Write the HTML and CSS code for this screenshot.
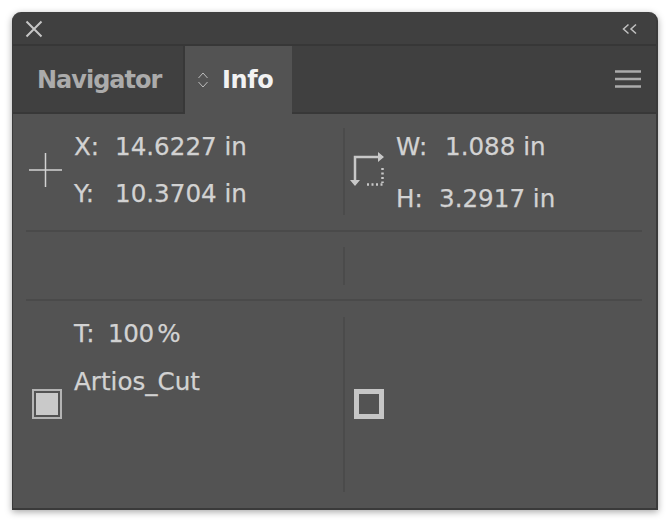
FILE: index.html
```html
<!DOCTYPE html>
<html lang="en">
<head>
<meta charset="utf-8">
<title>Info panel</title>
<link rel="stylesheet" href="styles.css">
</head>
<body>
<main class="panel">
  <header class="titlebar">
    <svg class="icon-close" width="18" height="18" viewBox="0 0 18 18"><path d="M1.5 1.5 16.5 16.5M16.500 1.5 1.5 16.5"/></svg>
    <svg class="icon-collapse" width="15" height="12" viewBox="0 0 15 12"><path d="M6.5 1.5 1.5 6 6.5 10.5M14 1.5 9 6 14 10.5"/></svg>
  </header>
  <nav class="tabbar">
    <div class="tab">Navigator</div>
    <div class="tab tab-active">
      <svg class="icon-stepper" width="12" height="18" viewBox="0 0 12 18"><path d="M1.5 7 6 2 10.500 7M1.500 11 6 16 10.500 11"/></svg>
      <span>Info</span>
    </div>
    <svg class="icon-menu" width="26" height="18" viewBox="0 0 26 18"><path d="M0 1.500H26M0 9H26M0 16.500H26"/></svg>
  </nav>
  <section class="content">
    <div class="section section-position">
      <div class="cell">
        <svg class="icon-cross" width="33" height="34" viewBox="0 0 33 34"><path d="M0 17H33M16.500 0V34"/></svg>
        <div class="readout">
          <div class="line"><span class="label">X:</span><span class="value">14.6227 in</span></div>
          <div class="line"><span class="label">Y:</span><span class="value">10.3704 in</span></div>
        </div>
      </div>
      <div class="cell cell-right">
        <svg class="icon-size" width="36" height="36" viewBox="0 0 36 36">
          <path class="solid" d="M5 30V5H30"/>
          <path class="fill" d="M28 0 34 5 28 10ZM0 28H10L5 34Z"/>
          <path class="dots" d="M32.500 16V31M17 32.500H34"/>
        </svg>
        <div class="readout readout-size">
          <div class="line"><span class="label label-w">W:</span><span class="value">1.088 in</span></div>
          <div class="line"><span class="label label-h">H:</span><span class="value">3.2917 in</span></div>
        </div>
      </div>
    </div>
    <div class="section section-empty">
      <div class="cell"></div>
      <div class="cell cell-right"></div>
    </div>
    <div class="section section-colour">
      <div class="cell">
        <span class="swatch swatch-fill"></span>
        <div class="readout readout-colour">
          <div class="line"><span class="label label-t">T:</span><span class="value value-percent">100 %</span></div>
          <div class="line">Artios_Cut</div>
        </div>
      </div>
      <div class="cell cell-right">
        <span class="swatch swatch-stroke"></span>
      </div>
    </div>
  </section>
</main>
</body>
</html>
```
FILE: styles.css
```css
* { box-sizing: border-box; }
html, body { margin: 0; height: 100%; background: #fff; }
body { padding: 12px 14px 12px 12px; font-family: "DejaVu Sans", sans-serif; color: #d2d2d2; }
svg { display: block; fill: none; }

.panel {
  width: 646px;
  height: 498px;
  display: flex;
  flex-direction: column;
  border-radius: 9px 9px 0 0;
  background: #404040;
  border: 1px solid #3a3a3a;
  border-width: 0 2px 2px 1px;
  box-shadow: 0 2px 7px rgba(0, 0, 0, .35);
  overflow: hidden;
}

.titlebar {
  height: 34px;
  flex: none;
  display: flex;
  align-items: center;
  justify-content: space-between;
  padding: 1px 19px 0 12px;
  border-bottom: 2px solid #373737;
}
.icon-close path { stroke: #c6c6c6; stroke-width: 2; }
.icon-collapse path { stroke: #c0c0c0; stroke-width: 1.500; }

.tabbar {
  height: 68px;
  flex: none;
  display: flex;
  align-items: stretch;
  border-bottom: 2px solid #383838;
}
.tab {
  width: 172px;
  display: flex;
  align-items: center;
  padding: 2px 0 0 24px;
  font-size: 24px;
  letter-spacing: -1px;
  font-weight: 700;
  color: #ababab;
  border-right: 2px solid #383838;
}
.tab-active {
  width: 107px;
  margin-bottom: -2px;
  padding: 0 0 0 12px;
  gap: 13px;
  letter-spacing: -.400px;
  background: #535353;
  border-right: 0;
  color: #f2f2f2;
}
.icon-stepper path { stroke: #bdbdbd; stroke-width: 1; }
.icon-menu { margin: auto 15px auto auto; }
.icon-menu path { stroke: #ababab; stroke-width: 2.500; }

.content {
  flex: 1;
  display: flex;
  flex-direction: column;
  padding: 0 14px 0 13px;
  background: #535353;
}
.section {
  display: grid;
  grid-template-columns: 317px 1fr;
  border-bottom: 2px solid #4a4a4a;
}
.section-position { height: 118px; padding: 14px 0 15px; }
.section-empty { height: 69px; padding: 15px 0 14px; }
.section-colour { flex: 1; padding: 16px 0 16px; border-bottom: 0; }

.cell { display: flex; position: relative; }
.cell-right { border-left: 2px solid #4b4b4b; }

.icon-cross { margin: 25px 0 0 3px; flex: none; }
.icon-cross path { stroke: #d2d2d2; stroke-width: 1.500; }
.readout { margin-left: 12px; padding-top: 4px; display: flex; flex-direction: column; gap: 17px; }
.line {
  display: flex;
  font-size: 24.600px;
  line-height: 30px;
  white-space: nowrap;
  -webkit-text-stroke: .250px #d2d2d2;
}
.label { width: 41px; }
.value { display: block; }
.value-percent { word-spacing: -4px; letter-spacing: -.400px; }

.icon-size { margin: 24px 0 0 5px; flex: none; }
.solid { stroke: #c8c8c8; stroke-width: 2.500; }
.fill { fill: #c8c8c8; }
.dots { stroke: #c8c8c8; stroke-width: 2.500; stroke-dasharray: 2 2.500; }
.readout-size { margin-left: 10px; gap: 22px; }
.label-w { width: 49px; }
.label-h { width: 43px; }

.swatch { display: block; width: 30px; height: 30px; flex: none; position: absolute; top: 72px; }
.swatch-fill { left: 6px; background: #c9c9c9; box-shadow: inset 0 0 0 2px #535353; border: 2px solid #b4b4b4; }
.swatch-stroke { left: 9px; border: 5px solid #c6c6c6; }
.readout-colour { margin-left: 48px; gap: 18px; padding-top: 2px; }
.label-t { width: 34px; }
```
